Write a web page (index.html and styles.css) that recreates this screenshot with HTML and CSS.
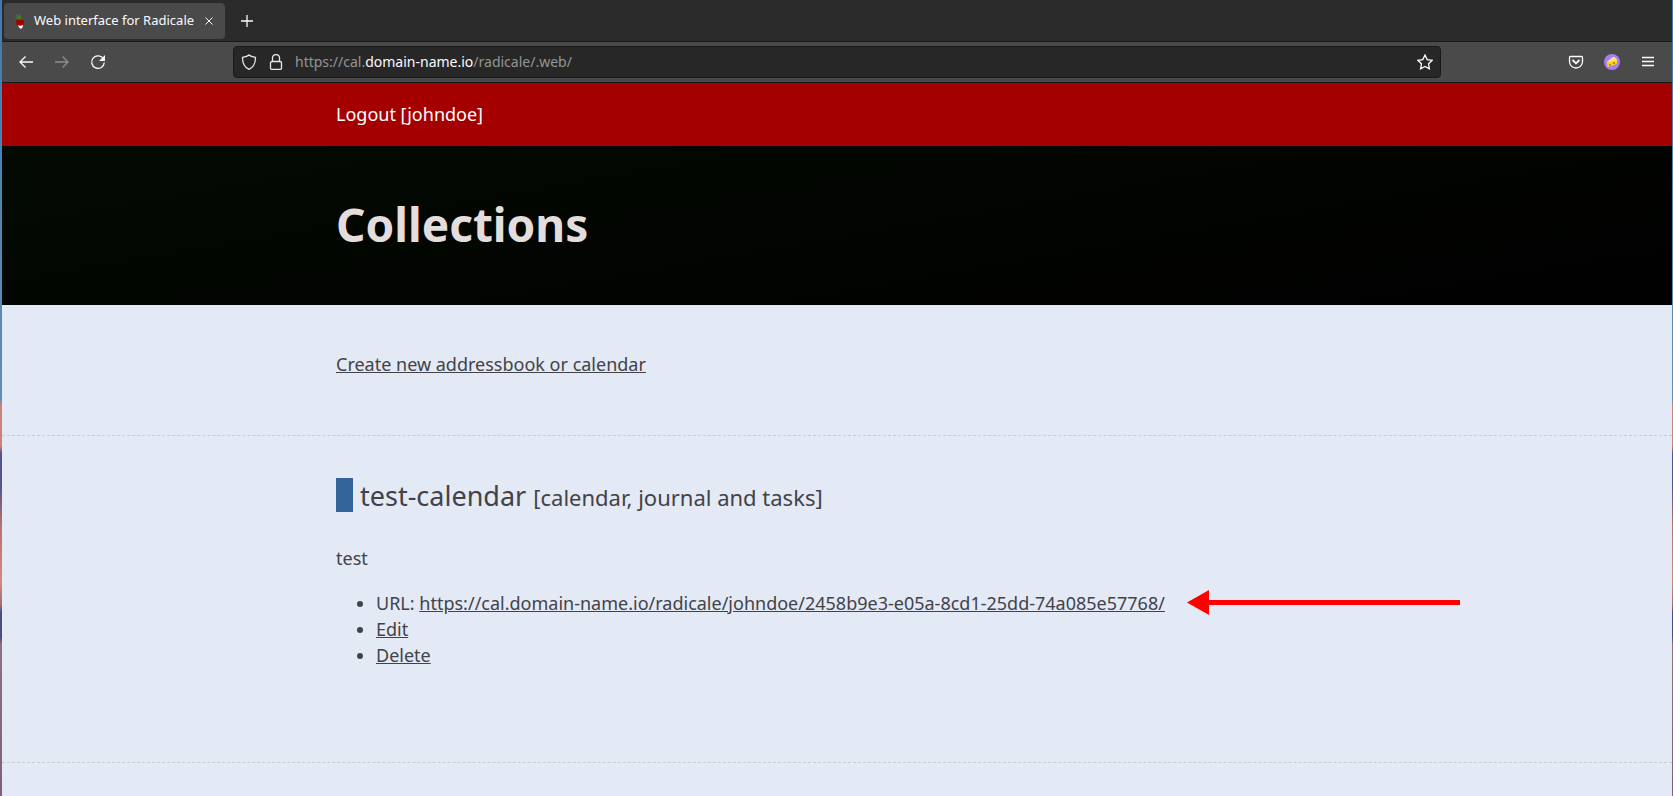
FILE: index.html
```
<!DOCTYPE html>
<html lang="en">
<head>
<meta charset="utf-8">
<title>Web interface for Radicale</title>
<link rel="stylesheet" href="styles.css">
</head>
<body>
	<div class="window">
		<div class="tabs">
			<div class="tab">
				<svg class="favicon" width="16" height="16" viewBox="0 0 16 16">
					<path d="M7 7C4 6 3 5 1 4l3 0L3 1l3 2 0-3 2 3v4z" fill="#3f7d1c"/>
					<path d="M3 9c0-3 3-3 4-2 2-1 5 0 4 3-1 2-2 4-3 5C5 14 3 12 3 9z" fill="#a40000"/>
					<path d="M5 12l2 1 3-1c0 2-1 3-2 4-1-1-3-2-3-4z" fill="#fff"/>
				</svg>
				<span>Web interface for Radicale</span>
				<button class="close" aria-label="Close tab">
					<svg width="8" height="8" viewBox="0 0 8 8"><path d="M0.500 0.500l7 7M7.500 0.500l-7 7"/></svg>
				</button>
			</div>
			<button class="new" aria-label="New tab">
				<svg width="12" height="12" viewBox="0 0 12 12"><path d="M6 0v12M0 6h12"/></svg>
			</button>
		</div>
		<div class="toolbar">
			<div class="history">
				<button aria-label="Back">
					<svg width="16" height="16" viewBox="0 0 16 16"><path d="M15 8H2M7.500 2.500L2 8l5.500 5.500"/></svg>
				</button>
				<button class="off" aria-label="Forward">
					<svg width="16" height="16" viewBox="0 0 16 16"><path d="M1 8h13M8.500 2.500L14 8l-5.500 5.500"/></svg>
				</button>
				<button aria-label="Reload">
					<svg width="16" height="16" viewBox="0 0 16 16"><path d="M13.500 5A6.300 6.300 0 1 0 14.300 8.500"/><path class="fill" d="M15 1v6H9z"/></svg>
				</button>
			</div>
			<div class="address">
				<svg width="16" height="16" viewBox="0 0 16 16"><path d="M8 1C6.500 2.500 4 3 1.500 3.300 1.400 9 3 13 8 15.300 13 13 14.600 9 14.500 3.300 12 3 9.500 2.500 8 1z"/></svg>
				<svg width="16" height="16" viewBox="0 0 16 16"><rect x="2.500" y="7.500" width="11" height="8" rx="1.500"/><path d="M4.500 7V4a3.500 3.500 0 0 1 7 0v3"/></svg>
				<span class="url">https://cal.<b>domain-name.io</b>/radicale/.web/</span>
				<button aria-label="Bookmark this page">
					<svg width="16" height="16" viewBox="0 0 16 16"><path d="M8 1l2.200 4.600 5 .7-3.700 3.500.9 5L8 12.400 3.600 14.800l.9-5L.8 6.300l5-.7z"/></svg>
				</button>
			</div>
			<div class="tools">
				<button aria-label="Save to Pocket">
					<svg width="16" height="16" viewBox="0 0 16 16"><path d="M2.500 2.500h11a1 1 0 0 1 1 1V7.500a6.500 6.500 0 0 1-13 0V3.500a1 1 0 0 1 1-1z"/><path d="M4.500 6L8 9.300 11.500 6" stroke-width="1.800"/></svg>
				</button>
				<button aria-label="Account">
					<svg class="avatar" width="16" height="16" viewBox="0 0 16 16">
						<circle cx="8" cy="8" r="8" fill="#a77ff5"/>
						<path d="M3 8l6-5c2 0 4 2 4 4v3l-9 3c-1-1-1-3-1-5z" fill="#f8d21c"/>
						<path d="M3 8l6-5c2 0 4 2 4 4z" fill="#ffe96a"/>
						<path d="M5 10h2v2H5zM9 8h2v2H9z" fill="#c98a10"/>
					</svg>
				</button>
				<button aria-label="Open menu">
					<svg width="12" height="12" viewBox="0 0 12 12"><path d="M0 1.500h12M0 5.500h12M0 9.500h12"/></svg>
				</button>
			</div>
		</div>
		<div class="page">
			<nav><a href="#">Logout [johndoe]</a></nav>
			<header><h1>Collections</h1></header>
			<section class="create"><a href="#">Create new addressbook or calendar</a></section>
			<section class="collection">
				<h2><span class="color"></span>test-calendar <small>[calendar, journal and tasks]</small></h2>
				<p>test</p>
				<ul>
					<li>URL: <a href="#">https://cal.domain-name.io/radicale/johndoe/2458b9e3-e05a-8cd1-25dd-74a085e57768/</a><svg class="arrow" width="273" height="25" viewBox="0 0 273 25"><path d="M0 12.500L22 0v25z"/><path d="M21 10h252v5H21z"/></svg></li>
					<li><a href="#">Edit</a></li>
					<li><a href="#">Delete</a></li>
				</ul>
			</section>
		</div>
	</div>
</body>
</html>
```

FILE: styles.css
```
*{margin: 0;padding: 0;box-sizing: border-box;}
body{
	min-height: 100vh;
	padding: 0 1px 0 2px;
	background: linear-gradient(#3f7cb0 0%, #5c8fb5 50%, #c98478 51%, #c98478 56%, #55548a 57%, #55548a 61%, #b87070 66%, #d08a7c 73%, #a06c78 76%, #4c4c80 77%, #4c4c80 80%, #8f6f80 81%, #7f6078 100%);
}
button{
	display: flex;
	align-items: center;
	justify-content: center;
	width: 36px;
	height: 32px;
	border: 0;
	background: none;
	color: #fbfbfe;
}
.tabs svg,
.toolbar svg{
	flex: none;
	fill: none;
	stroke: currentColor;
	stroke-width: 1.3;
}
.tabs .favicon,
.toolbar .avatar{
	stroke: none;
}
.tabs .close svg{
	stroke-width: 1;
}
.toolbar .fill{
	fill: currentColor;
	stroke: none;
}
.window{
	display: flex;
	flex-direction: column;
	min-height: 100vh;
	font-family: "Noto Sans", sans-serif;
}
.tabs{
	display: flex;
	align-items: center;
	height: 42px;
	padding-left: 2px;
	background: #2b2b2b;
	border-bottom: 1px solid #191919;
	font-size: 13px;
	color: #fbfbfe;
}
.tab{
	display: flex;
	align-items: center;
	width: 221px;
	height: 36px;
	padding-left: 9px;
	border-radius: 4px;
	background: #4a4a4a;
	white-space: nowrap;
}
.tab span{
	flex: 1;
	margin-left: 5px;
	padding-bottom: 2px;
}
.tab .close{
	width: 16px;
	height: 20px;
	margin-right: 8px;
}
.tabs .new{
	margin-left: 4px;
}
.toolbar{
	display: flex;
	align-items: center;
	justify-content: space-between;
	height: 41px;
	padding: 0 6px;
	background: #4a4a4a;
	border-bottom: 1px solid #191919;
}
.history,
.tools{
	display: flex;
	width: 225px;
}
.tools{
	justify-content: flex-end;
}
.off{
	color: #8f8f8f;
}
.address{
	display: flex;
	flex: 1;
	align-items: center;
	gap: 11px;
	height: 32px;
	padding-left: 7px;
	border: 1px solid #191919;
	border-radius: 4px;
	background: #272727;
	color: #e8e8e8;
}
.address button{
	width: 30px;
}
.url{
	flex: 1;
	padding-bottom: 2px;
	font-size: 14px;
	color: #959595;
}
.url b{
	font-weight: normal;
	color: #fbfbfe;
}
.page{
	flex: 1;
	background: #e4e9f6;
	color: #424247;
	font-size: 18px;
	line-height: 26px;
}
.page a{
	color: inherit;
}
nav,
header,
section{
	padding: 0 20%;
}
nav{
	padding-top: 18px;
	padding-bottom: 19px;
	background: #a40000;
	color: #fff;
}
nav a{
	text-decoration: none;
}
header{
	padding-top: 46px;
	padding-bottom: 49px;
	background: linear-gradient(170deg, #040a02, #000);
	color: #e4dddd;
}
h1{
	font-size: 46px;
	line-height: 64px;
}
section{
	border-bottom: 1px dashed #ccc;
}
.create{
	padding-top: 46px;
	padding-bottom: 58px;
}
.collection{
	padding-top: 40px;
	padding-bottom: 94px;
}
h2{
	font-size: 27px;
	font-weight: normal;
	line-height: 40px;
}
h2 small{
	font-size: 22px;
}
.color{
	display: inline-block;
	width: 17px;
	height: 34px;
	margin-right: 7px;
	background: #34659a;
	vertical-align: -6px;
}
.collection p{
	margin: 28px 0 19px;
}
ul{
	padding-left: 40px;
}
li{
	white-space: nowrap;
}
.arrow{
	height: 25px;
	margin-left: 22px;
	fill: #f00;
	vertical-align: top;
}
```
